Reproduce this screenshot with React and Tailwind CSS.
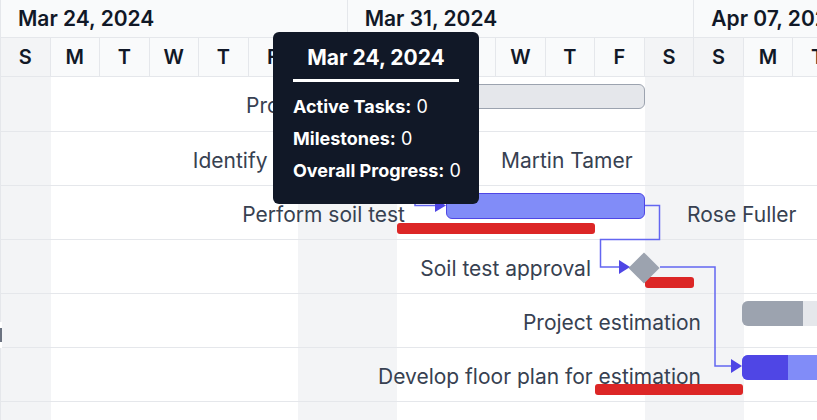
import React from 'react';

const DAY = 49.524;
const weeks = ['Mar 24, 2024', 'Mar 31, 2024', 'Apr 07, 2024'];
const dayLetters = ['S', 'M', 'T', 'W', 'T', 'F', 'S'];
const days = Array.from({ length: 18 }, (_, i) => ({
  letter: dayLetters[i % 7],
  weekend: i % 7 === 0 || i % 7 === 6,
}));

// row geometry in px relative to the chart's left edge
const rows = [
  { label: 'Project initiation', labelEnd: 404, bar: { left: 445, width: 199, kind: 'summary' } },
  { label: 'Identify site location', labelEnd: 392, bar: { left: 434, width: 25, kind: 'task' }, resource: { text: 'Martin Tamer', left: 500 } },
  {
    label: 'Perform soil test',
    labelEnd: 404,
    bar: { left: 445, width: 199, kind: 'task' },
    baseline: { left: 396, width: 198, top: 37 },
    resource: { text: 'Rose Fuller', left: 686 },
  },
  { label: 'Soil test approval', labelEnd: 590, milestone: 643, baseline: { left: 644, width: 49, top: 37 } },
  { label: 'Project estimation', labelEnd: 700, bar: { left: 741, width: 120, kind: 'grayProgress', done: 61 } },
  {
    label: 'Develop floor plan for estimation',
    labelEnd: 700,
    bar: { left: 741, width: 120, kind: 'indigoProgress', done: 46 },
    baseline: { left: 594, width: 148, top: 36 },
  },
  { label: '', labelEnd: 0 },
];

function Bar({ bar }) {
  const pos = { left: bar.left, width: bar.width };
  if (bar.kind === 'summary') {
    return <div className="absolute top-[7px] h-[25px] rounded-md border border-[#9ca3af] bg-[#e5e7eb]" style={pos} />;
  }
  if (bar.kind === 'task') {
    return <div className="absolute top-[7px] h-[26px] rounded-md border border-[#4f46e5] bg-[#818cf8]" style={pos} />;
  }
  if (bar.kind === 'grayProgress') {
    return (
      <div className="absolute top-[7px] h-[25px] flex overflow-hidden rounded-l-md bg-[#e5e7eb]" style={pos}>
        <div className="h-full bg-[#9ca3af]" style={{ width: bar.done }} />
      </div>
    );
  }
  return (
    <div className="absolute top-[7px] h-[25px] flex overflow-hidden rounded-l-md bg-[#818cf8]" style={pos}>
      <div className="h-full bg-[#4f46e5]" style={{ width: bar.done }} />
    </div>
  );
}

function Row({ row, first }) {
  return (
    <div className={`relative border-b border-[#e5e7eb] ${first ? 'h-[55px]' : 'h-[54px]'}`}>
      {row.label && (
        <div
          className="absolute top-0 h-full flex items-center justify-end pt-[4px] text-[21px] text-[#374151] whitespace-nowrap"
          style={{ left: 0, width: row.labelEnd }}
        >
          {row.label}
        </div>
      )}
      {row.baseline && (
        <div
          className="absolute h-[11px] rounded-[3px] bg-[#dc2626]"
          style={{ left: row.baseline.left, width: row.baseline.width, top: row.baseline.top }}
        />
      )}
      {row.bar && <Bar bar={row.bar} />}
      {row.milestone && (
        <div
          className="absolute top-[17px] w-[22px] h-[22px] rotate-45 bg-[#9ca3af]"
          style={{ left: row.milestone - 11 }}
        />
      )}
      {row.resource && (
        <div
          className="absolute top-0 h-full flex items-center pt-[4px] text-[21px] text-[#374151] whitespace-nowrap"
          style={{ left: row.resource.left }}
        >
          {row.resource.text}
        </div>
      )}
    </div>
  );
}

function Connectors() {
  return (
    <svg className="absolute left-0 top-0 pointer-events-none" width="817" height="420">
      <g fill="none" stroke="#6366f1" strokeWidth="1.5">
        <path d="M459 158 H470 V180 H415 V205.5 H437" />
        <path d="M645 205.5 H659.5 V239.5 H600.5 V267 H620" />
        <path d="M660 267 H715 V366 H733" />
      </g>
      <g fill="#4f46e5">
        <path d="M435 199 L446 205.5 L435 212 Z" />
        <path d="M619 260 L630 267 L619 274 Z" />
        <path d="M731 359 L742 366 L731 373 Z" />
      </g>
    </svg>
  );
}

function Tooltip() {
  return (
    <div className="absolute left-[273px] top-[32px] w-[206px] h-[172px] rounded-md bg-[#111827] px-[20px] pt-[12px] text-white">
      <div className="h-[28px] leading-[28px] text-center text-[21px] font-bold">Mar 24, 2024</div>
      <div className="mt-[7px] h-[3px] bg-white" />
      <div className="mt-[9px] text-[18px]">
        <div className="h-[32px] leading-[32px] whitespace-nowrap">
          <span className="font-bold">Active Tasks:</span> 0
        </div>
        <div className="h-[32px] leading-[32px] whitespace-nowrap">
          <span className="font-bold">Milestones:</span> 0
        </div>
        <div className="h-[32px] leading-[32px] whitespace-nowrap">
          <span className="font-bold">Overall Progress:</span> 0
        </div>
      </div>
    </div>
  );
}

export default function App() {
  return (
    <div className="relative w-[817px] h-[420px] overflow-hidden bg-white font-['Inter',sans-serif]">
      <div className="w-[900px] border-l border-[#e5e7eb]">
        {/* week header */}
        <div className="flex h-[38px] border-b border-[#e5e7eb] bg-[#f9fafb]">
          {weeks.map((w) => (
            <div
              key={w}
              className="shrink-0 flex items-center pl-[17px] border-r border-[#e5e7eb] text-[21px] font-semibold text-[#111827]"
              style={{ width: DAY * 7 }}
            >
              {w}
            </div>
          ))}
        </div>
        {/* day header */}
        <div className="flex h-[39px] border-b border-[#e5e7eb] bg-[#f9fafb]">
          {days.map((d, i) => (
            <div
              key={i}
              className={`shrink-0 flex items-center justify-center border-r border-[#e5e7eb] text-[20px] font-semibold text-[#111827] ${
                d.weekend ? 'bg-[#f3f4f6]' : ''
              }`}
              style={{ width: DAY }}
            >
              {d.letter}
            </div>
          ))}
        </div>
        {/* body */}
        <div className="relative">
          <div className="absolute inset-0 flex">
            {days.map((d, i) => (
              <div key={i} className={`shrink-0 h-full ${d.weekend ? 'bg-[#f3f4f6]' : ''}`} style={{ width: DAY }} />
            ))}
          </div>
          {rows.map((r, i) => (
            <Row key={i} row={r} first={i === 0} />
          ))}
        </div>
      </div>
      <Connectors />
      <Tooltip />
      {/* splitter handle */}
      <div className="absolute left-0 top-[322px] w-[2px] h-[26px] bg-white pt-[6px]">
        <div className="w-[2px] h-[14px] bg-[#6b7280]" />
      </div>
    </div>
  );
}
